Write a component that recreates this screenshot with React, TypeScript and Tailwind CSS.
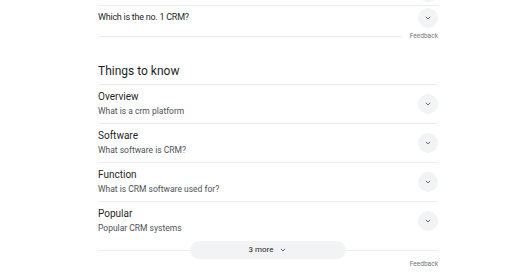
import React from "react";

const Chevron: React.FC<{ size?: number }> = ({ size = 8 }) => (
    <svg width={size} height={size} viewBox="0 0 10 10" fill="none">
        <polyline points="2.7,3.9 5,6.2 7.3,3.9" stroke="#4d5156" strokeWidth="1.1" strokeLinecap="round" strokeLinejoin="round" />
    </svg>
);

const CircleBtn: React.FC<{ className?: string }> = ({ className = "" }) => (
    <div className={`w-[20px] h-[20px] rounded-full bg-[#f1f3f4] flex items-center justify-center shrink-0 ${className}`}>
        <Chevron />
    </div>
);

const topics = [
    { title: "Overview", sub: "What is a crm platform" },
    { title: "Software", sub: "What software is CRM?" },
    { title: "Function", sub: "What is CRM software used for?" },
    { title: "Popular", sub: "Popular CRM systems" },
];

export default function App() {
    return (
        <div className="w-[520px] h-[272px] bg-white overflow-hidden" style={{ fontFamily: "Roboto, 'Liberation Sans', sans-serif" }}>
            <div className="ml-[98px] w-[340px]">
                {/* tail of the previous question */}
                <div className="h-[5px] overflow-hidden flex justify-end">
                    <CircleBtn className="-mt-[18px]" />
                </div>

                <div className="border-t border-[#ecedef] flex items-center justify-between pt-[2px] pb-[3px]">
                    <span className="text-[9px] tracking-[-0.25px] text-[#1f1f1f]">Which is the no. 1 CRM?</span>
                    <CircleBtn />
                </div>
                <div className="flex items-center h-[10px]">
                    <div className="flex-1 h-px bg-[#ecedef]"></div>
                    <span className="ml-[8px] text-[6.6px] leading-[10px] text-[#70757a]">Feedback</span>
                </div>

                {/* Things to know */}
                <h2 className="mt-[20px] pb-[3px] text-[12px] leading-[20px] text-[#1f1f1f]">Things to know</h2>

                {topics.map((t) => (
                    <div key={t.title} className="border-t border-[#ecedef] flex items-center justify-between pt-[5px] pb-[5px]">
                        <div className="flex flex-col">
                            <span className="text-[10px] leading-[14px] text-[#1f1f1f]">{t.title}</span>
                            <span className="text-[8.5px] leading-[14px] text-[#4d5156]">{t.sub}</span>
                        </div>
                        <CircleBtn />
                    </div>
                ))}

                <div className="relative flex items-center justify-center h-[18px] mt-[1px]">
                    <div className="absolute left-0 right-0 top-1/2 h-px bg-[#ecedef]"></div>
                    <button className="relative w-[156px] h-[18px] rounded-full bg-[#f1f3f4] flex items-center justify-center gap-[6px] text-[8px] text-[#1f1f1f]">
                        <span>3 more</span>
                        <Chevron />
                    </button>
                </div>
                <div className="flex justify-end h-[10px] items-center">
                    <span className="text-[6.6px] leading-[10px] text-[#70757a]">Feedback</span>
                </div>
            </div>
        </div>
    );
}
